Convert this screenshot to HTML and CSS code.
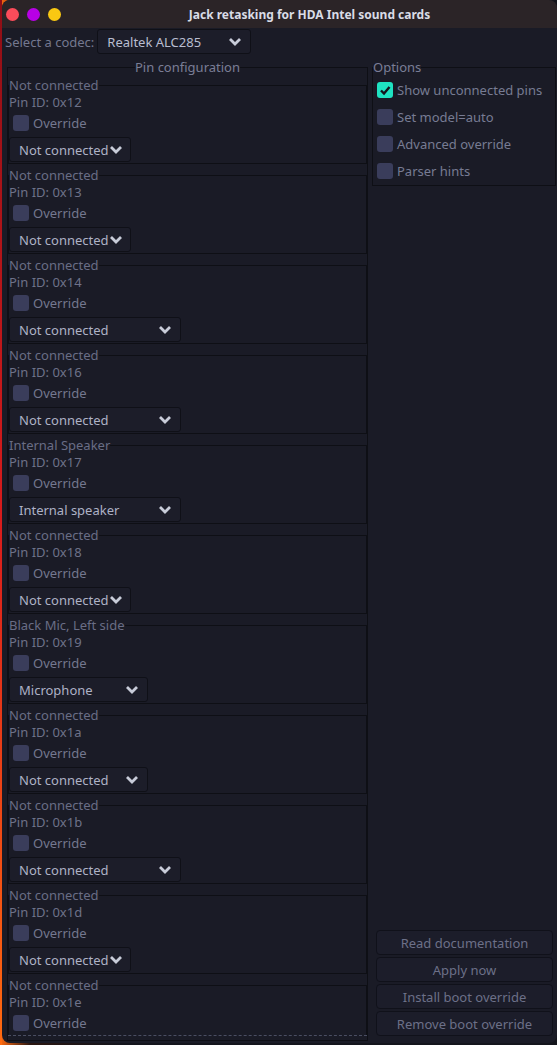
FILE: index.html
```html
<!DOCTYPE html>
<html>
<head>
    <meta charset="UTF-8" name="viewport" content="width=device-width, initial-scale=1.0"/>
    <title>Jack retasking for HDA Intel sound cards</title>
    <link rel="stylesheet" href="styles.css">
</head>
<body>
<div class="window">
    <div class="titlebar">
        <div class="lights">
            <span class="dot red"></span>
            <span class="dot purple"></span>
            <span class="dot yellow"></span>
        </div>
        <div class="title">Jack retasking for HDA Intel sound cards</div>
    </div>

    <div class="codec-row">
        <span>Select a codec:</span>
        <div class="combo codec"><span>Realtek ALC285</span><svg class="chev" viewBox="0 0 14 9"><path d="M2 2l5 5 5-5"/></svg></div>
    </div>

    <div class="main">
        <fieldset class="pins">
            <legend>Pin configuration</legend>
            <div class="scroll">
                <fieldset class="pin">
                    <legend>Not connected</legend>
                    <div class="pin-id">Pin ID: 0x12</div>
                    <label class="check"><span class="box"></span>Override</label>
                    <div class="combo narrow"><span>Not connected</span><svg class="chev" viewBox="0 0 14 9"><path d="M2 2l5 5 5-5"/></svg></div>
                </fieldset>
                <fieldset class="pin">
                    <legend>Not connected</legend>
                    <div class="pin-id">Pin ID: 0x13</div>
                    <label class="check"><span class="box"></span>Override</label>
                    <div class="combo narrow"><span>Not connected</span><svg class="chev" viewBox="0 0 14 9"><path d="M2 2l5 5 5-5"/></svg></div>
                </fieldset>
                <fieldset class="pin">
                    <legend>Not connected</legend>
                    <div class="pin-id">Pin ID: 0x14</div>
                    <label class="check"><span class="box"></span>Override</label>
                    <div class="combo wide"><span>Not connected</span><svg class="chev" viewBox="0 0 14 9"><path d="M2 2l5 5 5-5"/></svg></div>
                </fieldset>
                <fieldset class="pin">
                    <legend>Not connected</legend>
                    <div class="pin-id">Pin ID: 0x16</div>
                    <label class="check"><span class="box"></span>Override</label>
                    <div class="combo wide"><span>Not connected</span><svg class="chev" viewBox="0 0 14 9"><path d="M2 2l5 5 5-5"/></svg></div>
                </fieldset>
                <fieldset class="pin">
                    <legend>Internal Speaker</legend>
                    <div class="pin-id">Pin ID: 0x17</div>
                    <label class="check"><span class="box"></span>Override</label>
                    <div class="combo wide"><span>Internal speaker</span><svg class="chev" viewBox="0 0 14 9"><path d="M2 2l5 5 5-5"/></svg></div>
                </fieldset>
                <fieldset class="pin">
                    <legend>Not connected</legend>
                    <div class="pin-id">Pin ID: 0x18</div>
                    <label class="check"><span class="box"></span>Override</label>
                    <div class="combo narrow"><span>Not connected</span><svg class="chev" viewBox="0 0 14 9"><path d="M2 2l5 5 5-5"/></svg></div>
                </fieldset>
                <fieldset class="pin">
                    <legend>Black Mic, Left side</legend>
                    <div class="pin-id">Pin ID: 0x19</div>
                    <label class="check"><span class="box"></span>Override</label>
                    <div class="combo mid"><span>Microphone</span><svg class="chev" viewBox="0 0 14 9"><path d="M2 2l5 5 5-5"/></svg></div>
                </fieldset>
                <fieldset class="pin">
                    <legend>Not connected</legend>
                    <div class="pin-id">Pin ID: 0x1a</div>
                    <label class="check"><span class="box"></span>Override</label>
                    <div class="combo mid"><span>Not connected</span><svg class="chev" viewBox="0 0 14 9"><path d="M2 2l5 5 5-5"/></svg></div>
                </fieldset>
                <fieldset class="pin">
                    <legend>Not connected</legend>
                    <div class="pin-id">Pin ID: 0x1b</div>
                    <label class="check"><span class="box"></span>Override</label>
                    <div class="combo wide"><span>Not connected</span><svg class="chev" viewBox="0 0 14 9"><path d="M2 2l5 5 5-5"/></svg></div>
                </fieldset>
                <fieldset class="pin">
                    <legend>Not connected</legend>
                    <div class="pin-id">Pin ID: 0x1d</div>
                    <label class="check"><span class="box"></span>Override</label>
                    <div class="combo narrow"><span>Not connected</span><svg class="chev" viewBox="0 0 14 9"><path d="M2 2l5 5 5-5"/></svg></div>
                </fieldset>
                <!-- last group runs past the bottom of the scroll area -->
                <fieldset class="pin cut">
                    <legend>Not connected</legend>
                    <div class="pin-id">Pin ID: 0x1e</div>
                    <label class="check"><span class="box"></span>Override</label>
                </fieldset>
            </div>
        </fieldset>

        <div class="side">
            <fieldset class="options">
                <legend>Options</legend>
                <label class="check"><span class="box on"><svg viewBox="0 0 16 16"><path d="M4 8.5l3 3 5.5-6.5"/></svg></span>Show unconnected pins</label>
                <label class="check"><span class="box"></span>Set model=auto</label>
                <label class="check"><span class="box"></span>Advanced override</label>
                <label class="check"><span class="box"></span>Parser hints</label>
            </fieldset>
            <div class="buttons">
                <button>Read documentation</button>
                <button>Apply now</button>
                <button>Install boot override</button>
                <button>Remove boot override</button>
            </div>
        </div>
    </div>
</div>
</body>
</html>
```

FILE: styles.css
```css
body {
    margin: 0;
    height: 1045px;
    overflow: hidden;
    background: linear-gradient(#8e0e16, #d81c1c 50%, #ff6a10) left top / 2px 100% no-repeat,
                linear-gradient(to right, #ff6a10, #2a1610 30px, #14151c 120px);
    font-family: "Noto Sans", "DejaVu Sans", sans-serif;
    font-size: 13px;
    color: #74788f;
}
.window {
    margin-left: 2px;
    width: 555px;
    height: 1043px;
    background: #1a1b26;
    border-radius: 8px;
    overflow: hidden;
}
.titlebar {
    height: 28px;
    background: #2b2427;
    display: flex;
    align-items: center;
}
.lights {
    display: flex;
    gap: 8px;
    width: 60px;
    padding-left: 4px;
    box-sizing: border-box;
}
.dot {
    width: 13px;
    height: 13px;
    border-radius: 50%;
}
.red { background: #fb4c5a; }
.purple { background: #b800e6; }
.yellow { background: #f9c812; }
.title {
    flex: 1;
    text-align: center;
    font-weight: bold;
    font-size: 12px;
    color: #d9dce6;
}

.codec-row {
    display: flex;
    align-items: center;
    gap: 3px;
    padding: 1px 0 0 3px;
    height: 25px;
}

/* combo boxes */
.combo {
    box-sizing: border-box;
    height: 25px;
    display: flex;
    align-items: center;
    justify-content: space-between;
    padding: 0 8px 0 9px;
    background: #1c1d29;
    border: 1px solid #0f1017;
    border-radius: 3px;
    color: #aeb2c6;
    white-space: nowrap;
}
.combo.codec { width: 154px; color: #b9bdd0; }
.combo.narrow { width: 122px; }
.combo.mid { width: 139px; }
.combo.wide { width: 172px; }
.chev {
    width: 14px;
    height: 9px;
    flex: none;
}
.chev path {
    fill: none;
    stroke: #c8ccd9;
    stroke-width: 2.8;
}

.main {
    display: grid;
    grid-template-columns: 361px 184px;
    column-gap: 4px;
    margin-top: 6px;
    padding-left: 5px;
    height: 981px;
}

fieldset {
    margin: 0;
    padding: 0;
    min-width: 0;
    border: 1px solid #0e0f15;
}
legend {
    padding: 0;
    line-height: 15px;
}

.pins {
    padding-bottom: 3px;
}
.pins > legend {
    margin: 0 auto;
    color: #7a7e96;
}
.scroll {
    height: 957px;
    padding-top: 3px;
    overflow: hidden;
    border-bottom: 1px dashed #4a4e62;
}
.pin {
    margin-bottom: 4px;
    padding-bottom: 1px;
}
.pin.cut {
    padding-bottom: 40px;
}
.pin > legend {
    color: #696d85;
}
.pin-id {
    margin-top: 1px;
    line-height: 16px;
    color: #6e7289;
}
.check {
    display: flex;
    align-items: center;
    gap: 4px;
    height: 16px;
    line-height: 16px;
}
.pin .check {
    margin: 5px 0 0 4px;
}
.pin .combo {
    margin-top: 6px;
}
.box {
    width: 16px;
    height: 16px;
    border-radius: 3px;
    background: #3a3d5b;
    flex: none;
}
.box.on {
    background: #1fe3c2;
}
.box svg {
    display: block;
    width: 16px;
    height: 16px;
}
.box path {
    fill: none;
    stroke: #14151d;
    stroke-width: 2.4;
}

.side {
    display: flex;
    flex-direction: column;
    padding-bottom: 5px;
}
.options {
    padding: 7px 0 6px 0;
}
.options > legend {
    color: #7a7e96;
}
.options .check {
    margin: 0 0 11px 4px;
    color: #777b93;
}
.options .check:last-child {
    margin-bottom: 0;
}
.buttons {
    margin-top: auto;
    display: flex;
    flex-direction: column;
    gap: 2px;
    padding-left: 4px;
}
button {
    width: 177px;
    height: 25px;
    padding: 0;
    background: #1c1d2a;
    border: 1px solid #10111a;
    border-radius: 4px;
    font-family: "Noto Sans", "DejaVu Sans", sans-serif;
    font-size: 13px;
    color: #6c7088;
}
```
